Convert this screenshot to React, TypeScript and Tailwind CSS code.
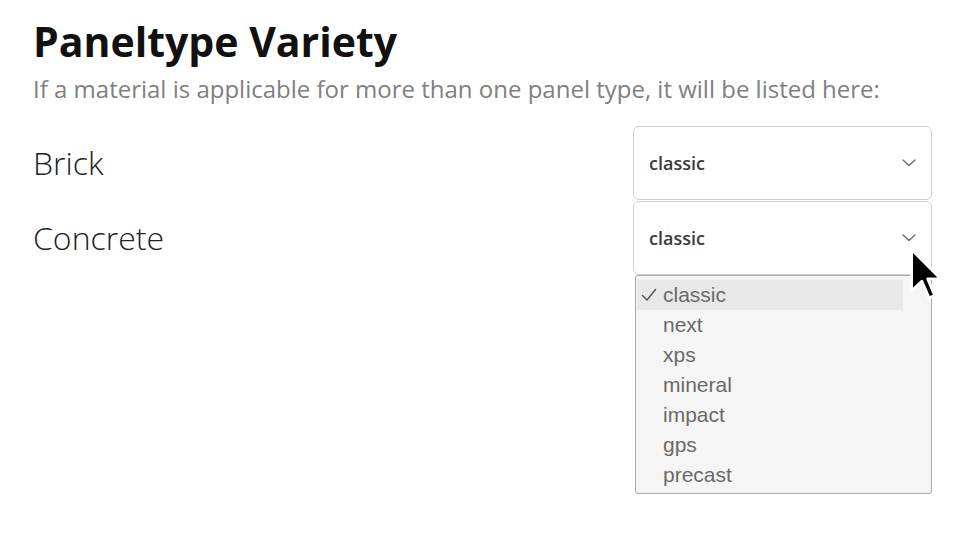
import React from 'react';

const options = ['classic', 'next', 'xps', 'mineral', 'impact', 'gps', 'precast'];
const materials = ['Brick', 'Concrete'];

const Chevron = () => (
    <svg width="14" height="8" viewBox="0 0 14 8" fill="none" className="shrink-0">
        <path d="M1 1l6 5.5L13 1" stroke="#6b6b6b" strokeWidth="1.4" strokeLinecap="round" strokeLinejoin="round" />
    </svg>
);

const Check = () => (
    <svg width="16" height="14" viewBox="0 0 16 14" fill="none">
        <path d="M1.5 7.5l4.5 4.5L14.5 1.5" stroke="#555" strokeWidth="1.5" strokeLinecap="round" strokeLinejoin="round" />
    </svg>
);

const Cursor = () => (
    <svg width="36" height="54" viewBox="-1 -1 14 21" className="absolute left-[909px] top-[247px] z-20 pointer-events-none">
        <path
            d="M0 0 L0 16 L4 12.3 L6.8 18.8 L9 17.9 L6.3 11.4 L11.4 11.4 Z"
            fill="#000"
            stroke="#fff"
            strokeWidth="1.1"
            strokeLinejoin="round"
        />
    </svg>
);

const SelectBox: React.FC<{ value: string; open?: boolean }> = ({ value, open }) => (
    <div className="relative w-[299px]">
        <div className="h-[74px] flex items-center justify-between pl-[15px] pr-[15px] bg-white border border-[#cfcfcf] rounded-[6px]">
            <span className="text-[18px] font-semibold text-[#3a3a3a]">{value}</span>
            <Chevron />
        </div>
        {open && (
            <div className="absolute left-[2px] top-[74px] w-[297px] pt-[4px] pb-[3px] bg-[#f5f5f5] border border-[#a9a9a9] rounded-[3px] z-10 font-['Liberation_Sans',Arial,sans-serif]">
                {options.map((opt, i) => (
                    <div
                        key={opt}
                        className={`h-[30px] w-[266px] ml-[1px] flex items-center text-[21px] text-[#6a6a6a] ${i === 0 ? 'bg-[#e8e8e8]' : ''}`}
                    >
                        <span className="w-[26px] pl-[4px] flex items-center">{i === 0 ? <Check /> : null}</span>
                        <span>{opt}</span>
                    </div>
                ))}
            </div>
        )}
    </div>
);

export default function App() {
    return (
        <div className="relative w-[978px] h-[534px] bg-white overflow-hidden font-['Open_Sans',sans-serif]">
            <div className="pl-[33px] pt-[17px] w-[932px]">
                <h1 className="text-[41px] leading-[48px] font-bold text-[#111]">Paneltype Variety</h1>
                <p className="mt-[9px] text-[24px] leading-[30px] text-[#808080] whitespace-nowrap">
                    If a material is applicable for more than one panel type, it will be listed here:
                </p>
                <div className="mt-[22px] flex flex-col gap-[1px]">
                    {materials.map((m, i) => (
                        <div key={m} className="flex items-center justify-between">
                            <span className="text-[32px] font-light text-[#222]">{m}</span>
                            <SelectBox value="classic" open={i === 1} />
                        </div>
                    ))}
                </div>
            </div>
            <Cursor />
        </div>
    );
}
